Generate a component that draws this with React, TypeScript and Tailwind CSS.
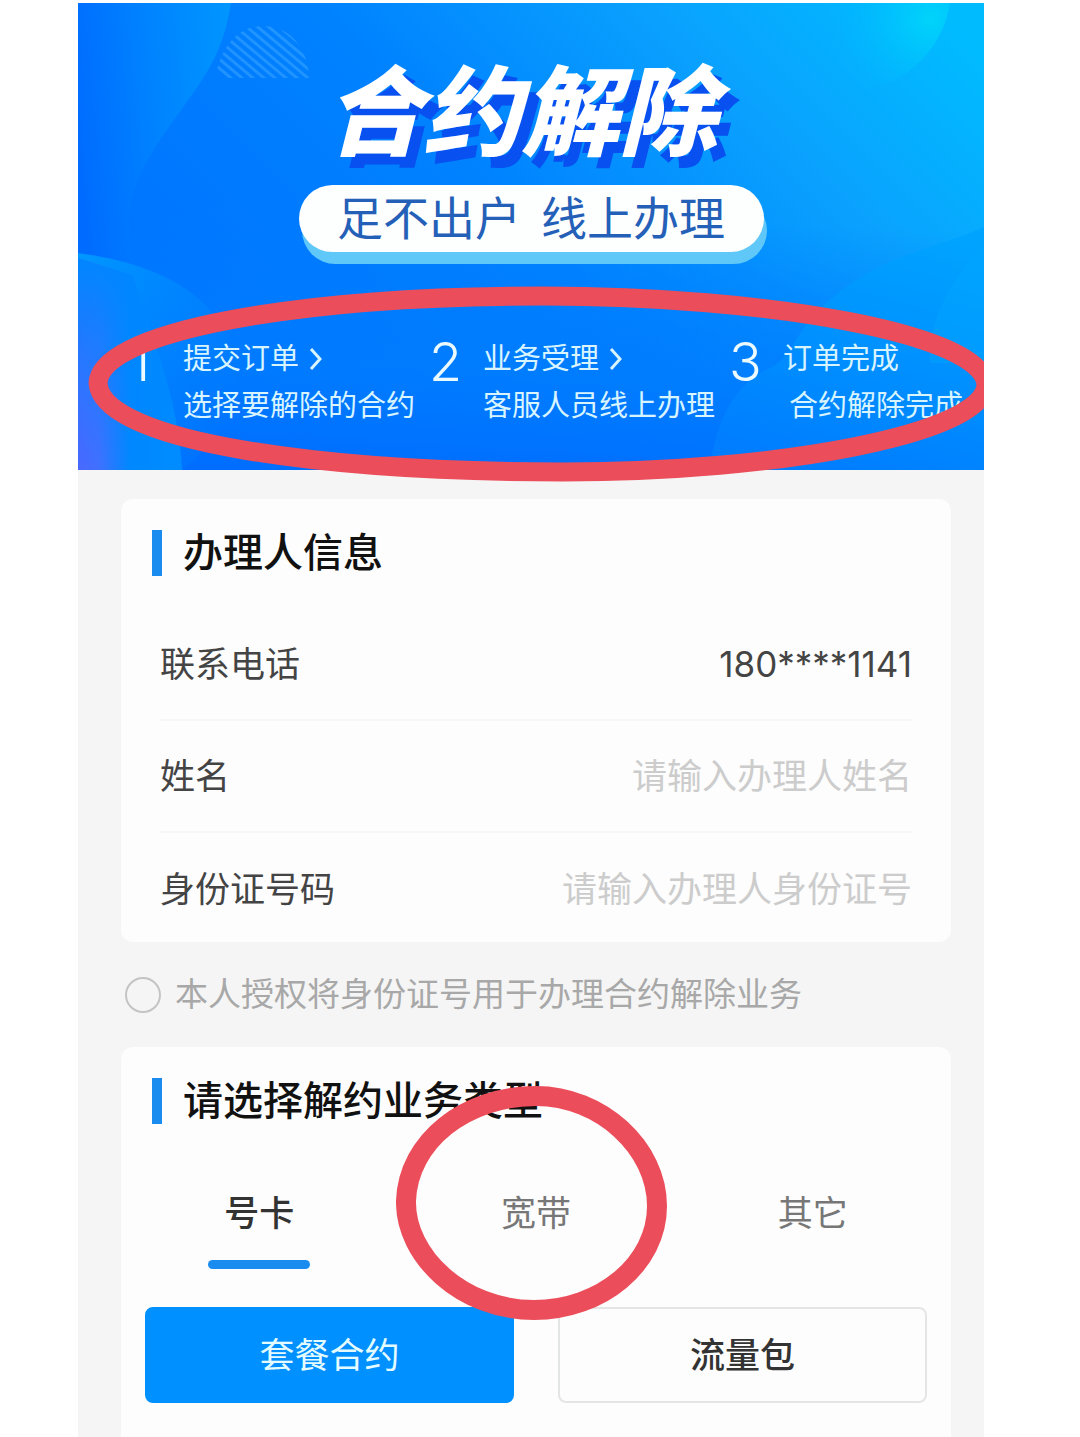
import React, { useState } from 'react';

const steps = [
  { title: '提交订单', desc: '选择要解除的合约', arrow: true },
  { title: '业务受理', desc: '客服人员线上办理', arrow: true },
  { title: '订单完成', desc: '合约解除完成', arrow: false },
];

const tabs = ['号卡', '宽带', '其它'];
const products = ['套餐合约', '流量包'];

const BannerArt: React.FC = () => (
  <svg
    className="absolute inset-0 w-full h-full"
    viewBox="0 0 906 467"
    preserveAspectRatio="none"
    aria-hidden="true"
  >
    <defs>
      <linearGradient id="base" x1="0" y1="0.6" x2="1" y2="0.1">
        <stop offset="0" stopColor="#0072ff" />
        <stop offset="0.45" stopColor="#0082ff" />
        <stop offset="0.75" stopColor="#0aa2fe" />
        <stop offset="1" stopColor="#00bcff" />
      </linearGradient>
      <linearGradient id="floor" x1="0.1" y1="0" x2="0" y2="1">
        <stop offset="0.4" stopColor="#007cff" stopOpacity="0" />
        <stop offset="0.75" stopColor="#007cff" stopOpacity="0.85" />
        <stop offset="1" stopColor="#006cff" />
      </linearGradient>
      <linearGradient id="leftWave" x1="0" y1="0.3" x2="1" y2="0">
        <stop offset="0" stopColor="#006cff" />
        <stop offset="0.5" stopColor="#0084ff" />
        <stop offset="1" stopColor="#0096ff" />
      </linearGradient>
      <linearGradient id="bubble" x1="0" y1="0" x2="1" y2="1">
        <stop offset="0" stopColor="#0098ff" />
        <stop offset="1" stopColor="#0072ff" stopOpacity="0.4" />
      </linearGradient>
      <linearGradient id="violet" x1="0" y1="0" x2="1" y2="0">
        <stop offset="0" stopColor="#4a68ff" />
        <stop offset="0.2" stopColor="#4070ff" />
        <stop offset="0.5" stopColor="#0088ff" />
        <stop offset="1" stopColor="#008cff" />
      </linearGradient>
      <linearGradient id="violetFade" x1="0" y1="0" x2="0" y2="1">
        <stop offset="0" stopColor="#0086ff" />
        <stop offset="0.45" stopColor="#0086ff" stopOpacity="0.5" />
        <stop offset="1" stopColor="#0086ff" stopOpacity="0" />
      </linearGradient>
      <linearGradient id="rightHill" x1="0.8" y1="0" x2="0.5" y2="1">
        <stop offset="0" stopColor="#00a4ff" />
        <stop offset="0.6" stopColor="#008eff" />
        <stop offset="1" stopColor="#007eff" />
      </linearGradient>
      <radialGradient id="corner" cx="0.9" cy="0.65" r="0.5">
        <stop offset="0" stopColor="#00d4fa" />
        <stop offset="1" stopColor="#00b4ff" stopOpacity="0" />
      </radialGradient>
      <clipPath id="dome">
        <path d="M137 75 C144 40 162 23 185 23 C212 23 230 45 231 75 Z" />
      </clipPath>
    </defs>
    <rect width="906" height="467" fill="url(#base)" />
    <rect width="906" height="467" fill="url(#floor)" />
    <path
      d="M0 0 H153 C146 45 130 70 108 100 C80 140 50 175 51 225 C52 255 58 272 66 290 L70 467 H0 Z"
      fill="url(#leftWave)"
    />
    <path d="M0 250 C90 262 158 300 158 380 C156 420 130 445 104 467 H0 Z" fill="url(#bubble)" />
    <path d="M0 255 L54 272 C70 320 102 400 104 467 H0 Z" fill="url(#violet)" />
    <path d="M0 255 L54 272 C70 320 102 400 104 467 H0 Z" fill="url(#violetFade)" />
    <path
      d="M632 467 C636 430 650 385 690 366 C722 350 710 330 760 290 C810 250 860 245 906 224 V467 Z"
      fill="url(#rightHill)"
    />
    <path d="M906 240 C880 270 850 310 852 360 H906 Z" fill="#00a8ff" opacity="0.4" />
    <circle cx="770" cy="-15" r="103" fill="url(#corner)" />
    <g clipPath="url(#dome)" stroke="#4fb4ff" strokeOpacity="0.4" strokeWidth="3">
      {[0, 1, 2, 3, 4, 5, 6, 7, 8, 9, 10, 11, 12].map((i) => (
        <line key={i} x1={75 + i * 11} y1="10" x2={165 + i * 11} y2="85" />
      ))}
    </g>
  </svg>
);

const SectionTitle: React.FC<{ text: string }> = ({ text }) => (
  <div className="flex items-center gap-[21px] h-[46px] pl-[31px]">
    <span className="w-[10px] h-full bg-[#1a8cf0]" />
    <h2 className="text-[40px] leading-[46px] font-medium text-[#111111]">{text}</h2>
  </div>
);

const Field: React.FC<{ id: string; label: string; placeholder?: string; value?: string }> = ({
  id,
  label,
  placeholder,
  value,
}) => (
  <div className="flex items-center h-[112px] border-b-2 border-[#f7f7f7] last:border-b-0">
    <label htmlFor={id} className="shrink-0 text-[35px] text-[#444444]">
      {label}
    </label>
    <input
      id={id}
      type="text"
      placeholder={placeholder}
      defaultValue={value}
      readOnly={value !== undefined}
      className="flex-1 min-w-0 bg-transparent text-right text-[35px] text-[#444444] placeholder:text-[#cccccc] outline-none"
    />
  </div>
);

const App: React.FC = () => {
  const [activeTab, setActiveTab] = useState(0);
  const [product, setProduct] = useState(0);

  return (
    <div className="min-h-screen flex bg-white pt-[3px] pl-[78px] pr-24 font-[Inter,'Noto_Sans_CJK_SC',sans-serif]">
      <main className="relative flex-1 min-w-0 overflow-hidden bg-[#f5f5f5]">
        <header className="relative">
          <BannerArt />
          <div className="relative flex flex-col items-center pt-[55px] pb-[41px]">
            <h1 className="pr-5 text-[98px] leading-[110px] font-black italic text-white [text-shadow:9px_11px_0_#0850f0]">
              合约解除
            </h1>
            <p className="flex items-center justify-center gap-5 w-[465px] h-[67px] mt-[17px] rounded-full bg-[#fdfefe] text-[46px] text-[#2460b8] shadow-[3px_12px_0_#60c8f8]">
              <span>足不出户</span>
              <span>线上办理</span>
            </p>
            <ol className="self-stretch flex gap-[14px] mt-[83px] pl-[51px] text-[29px] leading-[47px] text-[#d8f4ff]">
              {steps.map((step, index) => (
                <li key={step.title} className="flex shrink-0">
                  <span className="w-[54px] text-[54px] leading-[54px] font-light text-[#eafaff]">
                    {index + 1}
                  </span>
                  <div>
                    <p className="flex items-center gap-[10px]">
                      {step.title}
                      {step.arrow && (
                        <svg width="13" height="24" viewBox="0 0 13 24" fill="none" aria-hidden="true">
                          <path d="M2 2 L11 12 L2 22" stroke="currentColor" strokeWidth="3" />
                        </svg>
                      )}
                    </p>
                    <p className={step.arrow ? '' : 'pl-[6px]'}>{step.desc}</p>
                  </div>
                </li>
              ))}
            </ol>
          </div>
          <svg
            className="absolute z-10 left-[10px] top-[283px]"
            width="910"
            height="196"
            viewBox="0 0 910 196"
            fill="none"
            aria-hidden="true"
          >
            <path
              d="M10 97 C13 44 215 10 455 10 C680 10 896 48 898 99 C896 148 690 186 475 186 C245 186 14 158 10 97 Z"
              stroke="#eb4d5a"
              strokeWidth="19"
            />
          </svg>
        </header>

        <div className="pl-[43px] pr-[33px] pt-[29px]">
          <section className="rounded-xl bg-[#fdfdfd] pt-[31px]">
            <SectionTitle text="办理人信息" />
            <div className="h-[366px] pt-[33px] px-[39px]">
              <Field id="phone" label="联系电话" value="180****1141" />
              <Field id="name" label="姓名" placeholder="请输入办理人姓名" />
              <Field id="idcard" label="身份证号码" placeholder="请输入办理人身份证号" />
            </div>
          </section>

          <label className="flex items-center gap-[14px] h-[105px] pl-1 text-[33px] text-[#a8a8a8]">
            <input
              type="checkbox"
              className="appearance-none shrink-0 size-9 rounded-full border-2 border-[#c4c4c4] checked:bg-[#0090ff]"
            />
            本人授权将身份证号用于办理合约解除业务
          </label>

          <section className="relative rounded-t-xl bg-[#fdfdfd] pt-[31px] pb-[34px]">
            <SectionTitle text="请选择解约业务类型" />
            <div className="grid grid-cols-3 mt-[66px]">
              {tabs.map((tab, index) => (
                <button
                  key={tab}
                  type="button"
                  onClick={() => setActiveTab(index)}
                  className="flex flex-col items-center gap-6"
                >
                  <span
                    className={`text-[35px] leading-[46px] ${
                      activeTab === index ? 'font-medium text-[#333333]' : 'text-[#777777]'
                    }`}
                  >
                    {tab}
                  </span>
                  <span
                    className={`w-[102px] h-[9px] rounded-full ${
                      activeTab === index ? 'bg-[#1a8cf0]' : 'bg-transparent'
                    }`}
                  />
                </button>
              ))}
            </div>
            <div className="grid grid-cols-2 gap-[44px] mt-[38px] px-6">
              {products.map((item, index) => (
                <button
                  key={item}
                  type="button"
                  onClick={() => setProduct(index)}
                  className={`h-24 rounded-lg border-2 text-[35px] ${
                    product === index
                      ? 'border-[#0090ff] bg-[#0090ff] text-[#e4fcff]'
                      : 'border-[#e4e6e6] bg-[#fdfdfd] font-medium text-[#333333]'
                  }`}
                >
                  {item}
                </button>
              ))}
            </div>
            <svg
              className="absolute left-[275px] top-[39px]"
              width="271"
              height="234"
              viewBox="0 0 271 234"
              fill="none"
              aria-hidden="true"
            >
              <path
                d="M10 115 C12 55 70 10 140 10 C205 10 261 62 261 120 C261 178 205 224 138 224 C66 224 9 170 10 115 Z"
                stroke="#eb4d5a"
                strokeWidth="20"
              />
            </svg>
          </section>
        </div>
      </main>
    </div>
  );
};

export default App;
